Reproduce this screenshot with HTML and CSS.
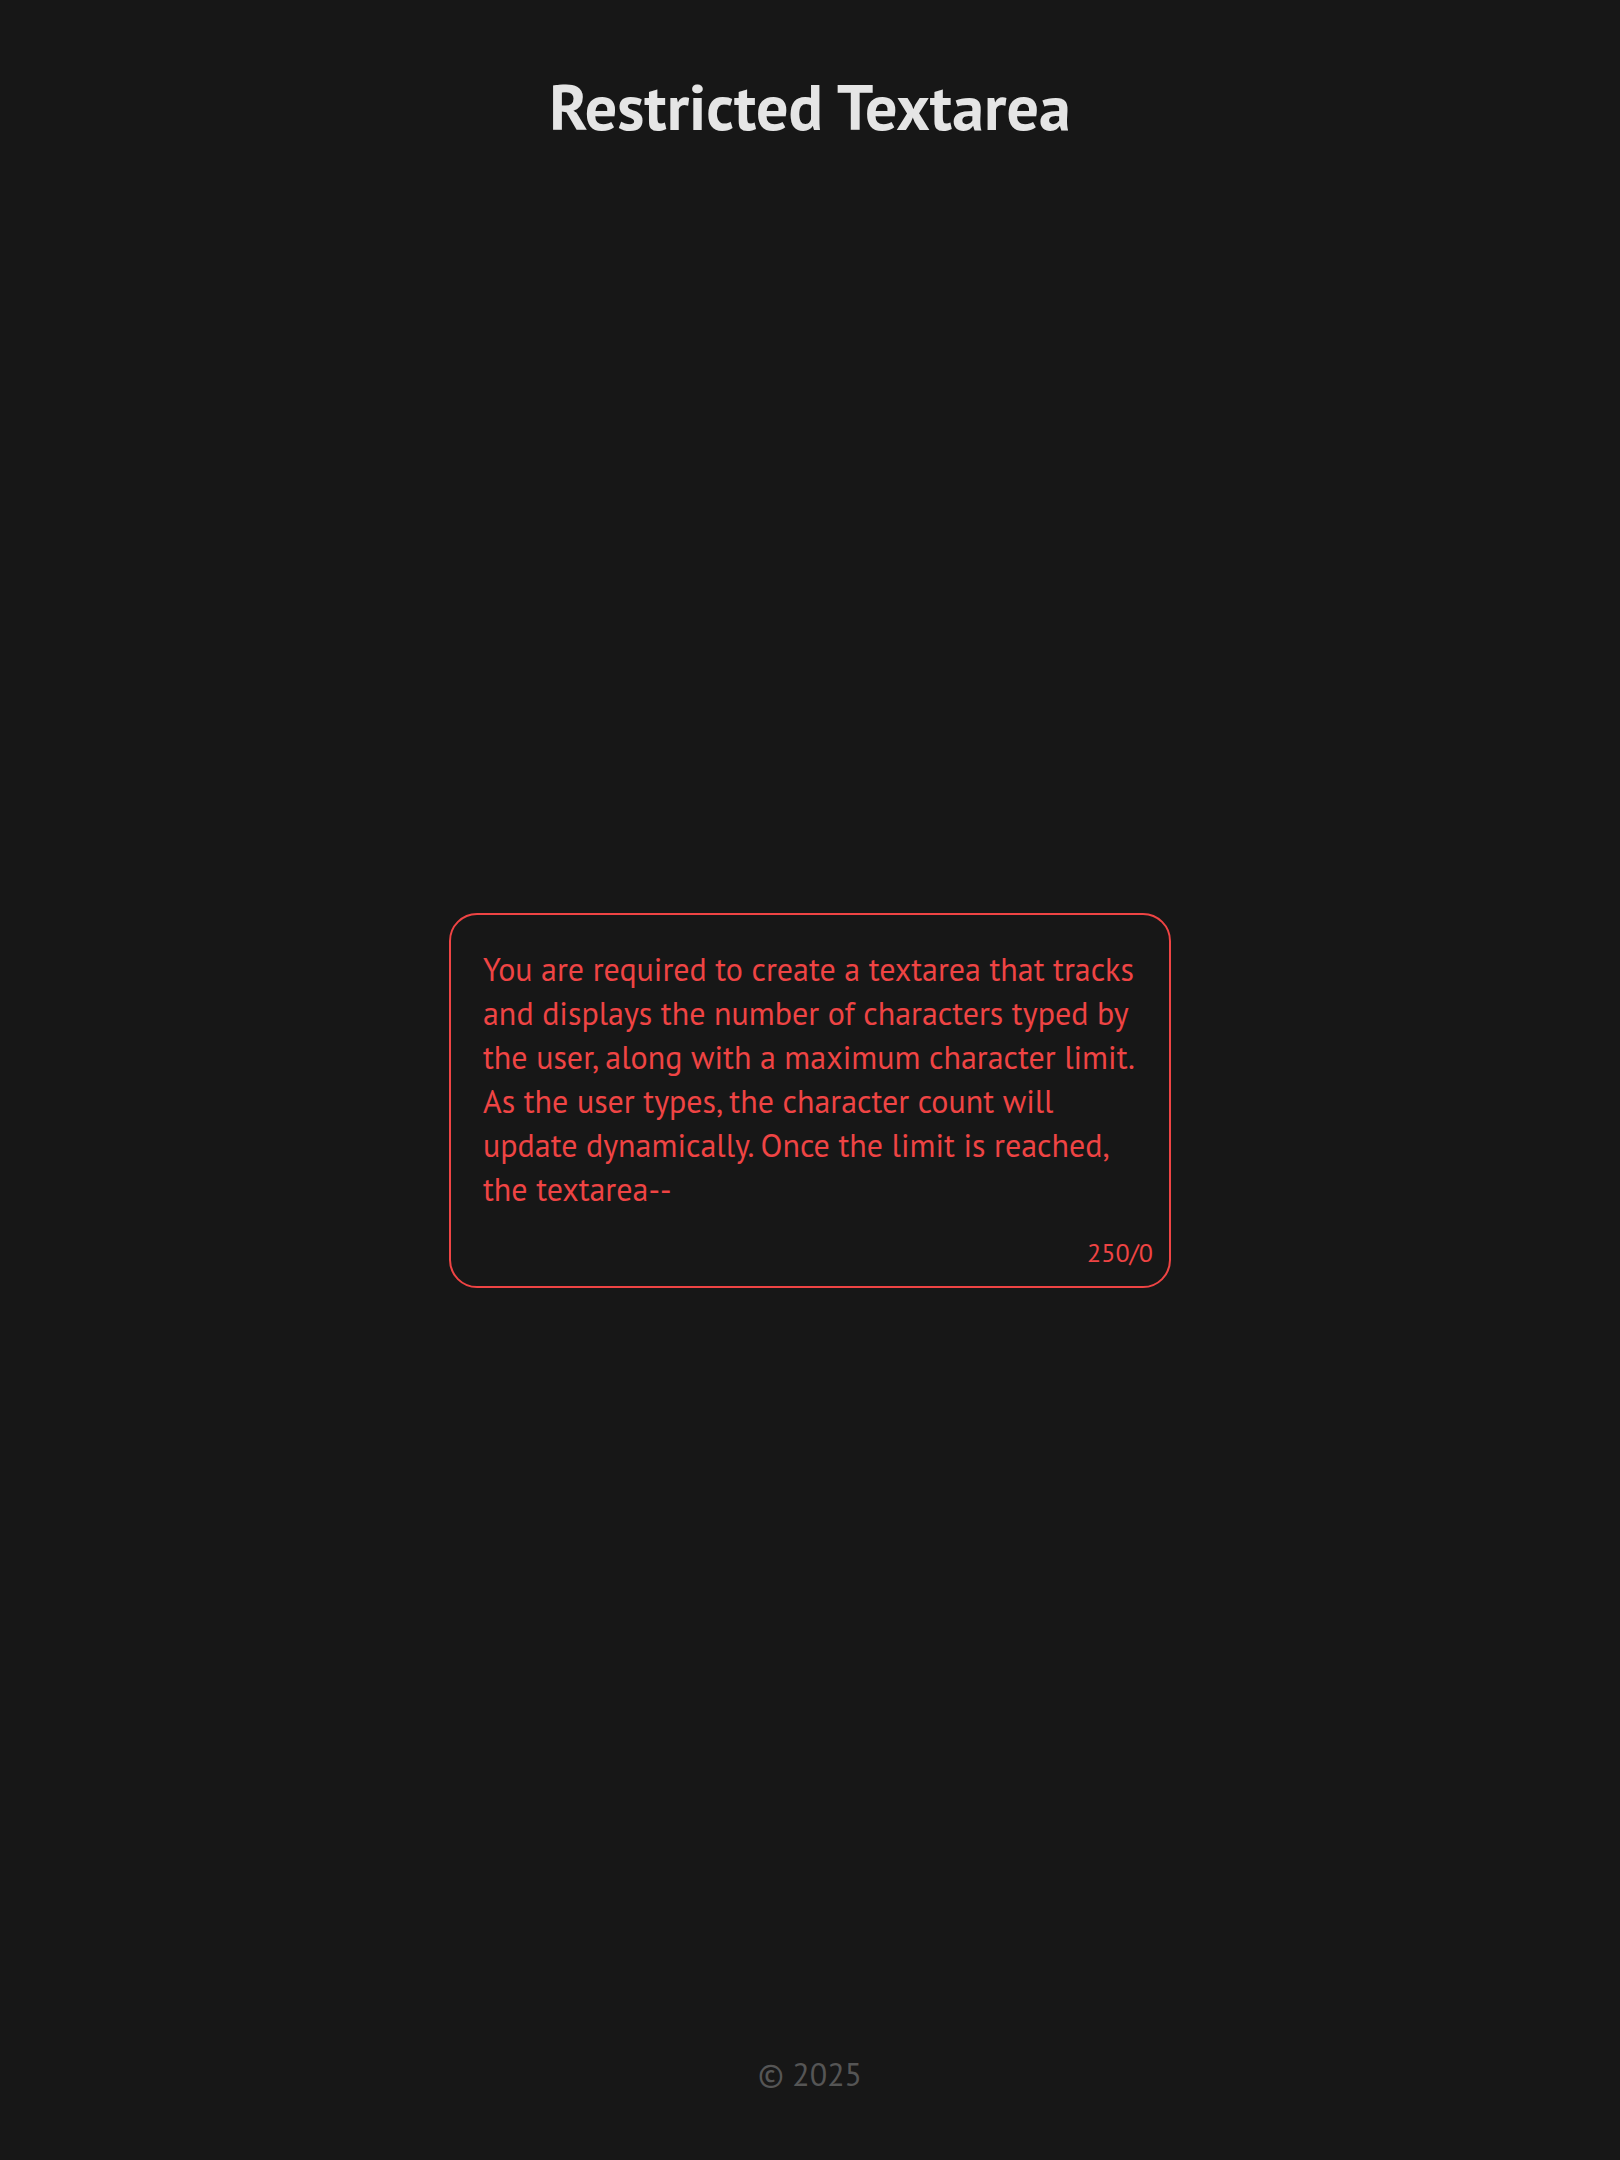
FILE: index.html
```html
<!DOCTYPE html>
<html lang="en">
<head>
<meta charset="utf-8">
<title>Restricted Textarea</title>
<link rel="stylesheet" href="styles.css">
</head>
<body>
<header class="header">
  <h1 class="title">Restricted Textarea</h1>
</header>
<main class="main">
  <div class="field">
    <div class="field-text">You are required to create a textarea that tracks and displays the number of characters typed by the user, along with a maximum character limit. As the user types, the character count will update dynamically. Once the limit is reached, the textarea--</div>
    <div class="counter">250/0</div>
  </div>
</main>
<footer class="footer">© 2025</footer>
</body>
</html>
```
FILE: styles.css
```css
html, body {
  margin: 0;
  padding: 0;
}
body {
  background: #171717;
  min-height: 100vh;
  display: flex;
  flex-direction: column;
  font-family: "PT Sans", "Lato", "Noto Sans", sans-serif;
}
.header {
  display: flex;
  justify-content: center;
  padding-top: 68px;
}
.title {
  margin: 0;
  font-size: 64px;
  line-height: 78px;
  font-weight: 700;
  color: #e5e5e5;
}
.main {
  flex: 1;
  display: flex;
  align-items: center;
  justify-content: center;
}
.field {
  width: 722px;
  box-sizing: border-box;
  border: 2px solid #ef4444;
  border-radius: 28px;
  padding: 32px 16px 17px 32px;
  color: #ef4444;
}
.field-text {
  font-size: 32px;
  line-height: 44px;
  padding-right: 8px;
}
.counter {
  text-align: right;
  font-size: 26px;
  line-height: 32px;
  margin-top: 26px;
}
.footer {
  text-align: center;
  color: #555555;
  font-size: 32px;
  line-height: 40px;
  padding-bottom: 66px;
}
```
